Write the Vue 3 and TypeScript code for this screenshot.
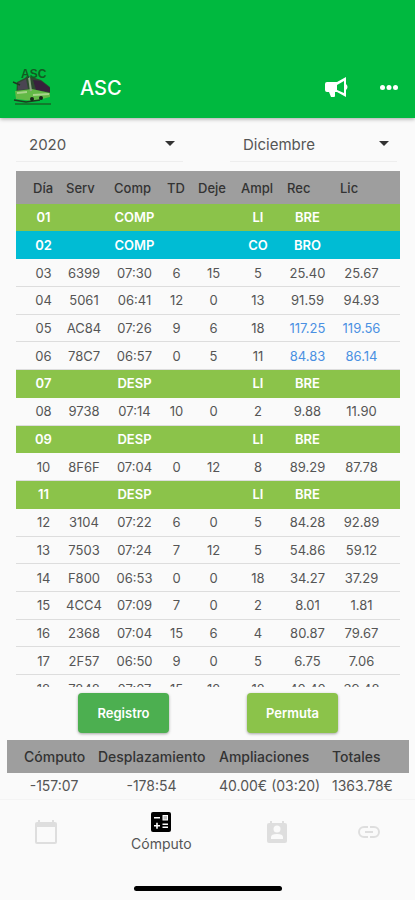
<script setup lang="ts">
import { ref } from 'vue'

type Tone = 'green' | 'cyan' | 'plain'

interface Day {
  tone: Tone
  cells: string[]
  extra?: boolean
}

const headers: string[] = ['Día', 'Serv', 'Comp', 'TD', 'Deje', 'Ampl', 'Rec', 'Lic']

const days: Day[] = [
  { tone: 'green', cells: ['01', '', 'COMP', '', '', 'LI', 'BRE', ''] },
  { tone: 'cyan', cells: ['02', '', 'COMP', '', '', 'CO', 'BRO', ''] },
  { tone: 'plain', cells: ['03', '6399', '07:30', '6', '15', '5', '25.40', '25.67'] },
  { tone: 'plain', cells: ['04', '5061', '06:41', '12', '0', '13', '91.59', '94.93'] },
  { tone: 'plain', cells: ['05', 'AC84', '07:26', '9', '6', '18', '117.25', '119.56'], extra: true },
  { tone: 'plain', cells: ['06', '78C7', '06:57', '0', '5', '11', '84.83', '86.14'], extra: true },
  { tone: 'green', cells: ['07', '', 'DESP', '', '', 'LI', 'BRE', ''] },
  { tone: 'plain', cells: ['08', '9738', '07:14', '10', '0', '2', '9.88', '11.90'] },
  { tone: 'green', cells: ['09', '', 'DESP', '', '', 'LI', 'BRE', ''] },
  { tone: 'plain', cells: ['10', '8F6F', '07:04', '0', '12', '8', '89.29', '87.78'] },
  { tone: 'green', cells: ['11', '', 'DESP', '', '', 'LI', 'BRE', ''] },
  { tone: 'plain', cells: ['12', '3104', '07:22', '6', '0', '5', '84.28', '92.89'] },
  { tone: 'plain', cells: ['13', '7503', '07:24', '7', '12', '5', '54.86', '59.12'] },
  { tone: 'plain', cells: ['14', 'F800', '06:53', '0', '0', '18', '34.27', '37.29'] },
  { tone: 'plain', cells: ['15', '4CC4', '07:09', '7', '0', '2', '8.01', '1.81'] },
  { tone: 'plain', cells: ['16', '2368', '07:04', '15', '6', '4', '80.87', '79.67'] },
  { tone: 'plain', cells: ['17', '2F57', '06:50', '9', '0', '5', '6.75', '7.06'] },
  { tone: 'plain', cells: ['18', '7848', '07:07', '15', '12', '12', '40.40', '39.48'] }
]

const years: string[] = ['2019', '2020', '2021']
const months: string[] = [
  'Enero', 'Febrero', 'Marzo', 'Abril', 'Mayo', 'Junio', 'Julio',
  'Agosto', 'Septiembre', 'Octubre', 'Noviembre', 'Diciembre'
]
const year = ref('2020')
const month = ref('Diciembre')
</script>

<template>
  <div class="screen">
    <header class="bar">
      <svg class="logo" viewBox="0 0 42 42" aria-hidden="true">
        <path d="M5 15 L13 11 L15 9 L20 10 L29 13 L38 20 L38 30 L4 31Z" fill="#2c4a2f" />
        <path d="M6 16 L14 12 L16 22 L6 23Z" fill="#4a4552" />
        <path d="M21 13 L29 14 L38 21 L38 25 L24 23Z" fill="#38203c" />
        <path d="M3 24 L20 22 L38 26 L38 30 L22 34 L4 32Z" fill="#62b946" />
        <path d="M17 10 L19 24" stroke="#8fa886" stroke-width="2" />
        <path d="M5 26 L15 25 M21 28 L37 27" stroke="#a8d38a" stroke-width="2" />
        <path d="M1 15 L8 18 M2 33 L14 35 L28 33" stroke="#1c3b20" stroke-width="1.5" fill="none" />
        <circle cx="20" cy="32" r="2" fill="#17231a" />
        <circle cx="29" cy="31" r="2" fill="#17231a" />
        <path d="M3 37 H39" stroke="#117a2c" stroke-width="2" />
        <text x="9" y="11" class="logo-text">ASC</text>
      </svg>
      <h1>ASC</h1>
      <button class="icon-button" type="button" aria-label="Avisos">
        <svg width="26" height="24" viewBox="0 0 26 24" aria-hidden="true">
          <path d="M4 6 H14 L23 1 V21 L14 16 H12 V20 Q12 21 11 21 H8 L6 16 H4 Q2 16 2 14 V8 Q2 6 4 6Z" fill="#fff" />
          <path d="M14 9 L21 5 V17 L14 14Z" fill="#00b93f" />
          <path d="M23 8 Q26 11 23 14Z" fill="#fff" />
        </svg>
      </button>
      <button class="icon-button" type="button" aria-label="Más opciones">
        <svg width="20" height="24" viewBox="0 0 20 24" aria-hidden="true" fill="#fff">
          <circle cx="3.5" cy="11.5" r="2.5" /><circle cx="10" cy="11.5" r="2.5" /><circle cx="16.5" cy="11.5" r="2.5" />
        </svg>
      </button>
    </header>

    <main>
      <div class="filters">
        <div class="picker">
          <select v-model="year" aria-label="Año">
            <option v-for="y in years" :key="y">{{ y }}</option>
          </select>
          <svg width="10" height="6" viewBox="0 0 10 6" aria-hidden="true"><path d="M0 0H10L5 5Z" /></svg>
        </div>
        <div class="picker">
          <select v-model="month" aria-label="Mes">
            <option v-for="m in months" :key="m">{{ m }}</option>
          </select>
          <svg width="10" height="6" viewBox="0 0 10 6" aria-hidden="true"><path d="M0 0H10L5 5Z" /></svg>
        </div>
      </div>

      <div class="days">
        <table>
          <colgroup>
            <col class="w-day" /><col class="w-serv" /><col class="w-comp" /><col class="w-td" />
            <col class="w-deje" /><col class="w-ampl" /><col class="w-comp" /><col class="w-lic" />
          </colgroup>
          <thead>
            <tr><th v-for="h in headers" :key="h" scope="col">{{ h }}</th></tr>
          </thead>
          <tbody>
            <tr v-for="d in days" :key="d.cells[0]" :class="[d.tone, { extra: d.extra }]">
              <td v-for="(c, i) in d.cells" :key="i">{{ c }}</td>
            </tr>
          </tbody>
        </table>
      </div>

      <div class="actions">
        <button type="button" class="register">Registro</button>
        <button type="button" class="swap">Permuta</button>
      </div>

      <div class="totals">
        <table>
          <colgroup>
            <col class="t-side" /><col class="t-move" /><col class="t-ext" /><col class="t-side" />
          </colgroup>
          <thead>
            <tr>
              <th scope="col">Cómputo</th><th scope="col">Desplazamiento</th>
              <th scope="col">Ampliaciones</th><th scope="col">Totales</th>
            </tr>
          </thead>
          <tbody>
            <tr><td>-157:07</td><td>-178:54</td><td>40.00€ (03:20)</td><td>1363.78€</td></tr>
          </tbody>
        </table>
      </div>
    </main>

    <nav>
      <div class="tabs">
        <a href="#calendario" aria-label="Calendario">
          <svg width="24" height="26" viewBox="0 0 24 26" aria-hidden="true">
            <path d="M3 4H21Q22 4 22 5V23Q22 24 21 24H3Q2 24 2 23V5Q2 4 3 4Z" fill="none" stroke="#dedede" stroke-width="2" />
            <path d="M2 4H22V8H2ZM4 1H6V4H4ZM18 1H20V4H18Z" fill="#dedede" />
          </svg>
        </a>
        <a href="#computo" class="current" aria-current="page">
          <svg width="20" height="20" viewBox="0 0 20 20" aria-hidden="true">
            <rect width="20" height="20" rx="2" fill="#000" />
            <path d="M3 5.8H9M11.5 12.2H17M11.5 15.2H17M3 13.7H9M6 10.7V16.7" stroke="#fff" stroke-width="1.6" />
            <rect x="12" y="3.5" width="4.5" height="4.5" fill="#bbb" stroke="#fff" />
          </svg>
          <span>Cómputo</span>
        </a>
        <a href="#contactos" aria-label="Contactos">
          <svg width="20" height="22" viewBox="0 0 20 22" aria-hidden="true">
            <path d="M2 2H3V0H5V2H15V0H17V2H18Q20 2 20 4V20Q20 22 18 22H2Q0 22 0 20V4Q0 2 2 2Z" fill="#dedede" />
            <circle cx="10" cy="8" r="3.5" fill="#fafafa" />
            <path d="M4 18V16Q4 13 10 13Q16 13 16 16V18Z" fill="#fafafa" />
          </svg>
        </a>
        <a href="#enlaces" aria-label="Enlaces">
          <svg width="22" height="12" viewBox="0 0 22 12" aria-hidden="true" fill="none" stroke="#dedede" stroke-width="2">
            <path d="M10 1H6A5 5 0 0 0 6 11H10M12 1H16A5 5 0 0 1 16 11H12M7 6H15" />
          </svg>
        </a>
      </div>
      <div class="home"></div>
    </nav>
  </div>
</template>

<style>
body {
  background: #fafafa;
}
</style>

<style scoped>
.screen {
  display: flex;
  flex-direction: column;
  height: 100vh;
  font-family: Inter, Roboto, sans-serif;
  font-size: 13px;
  color: #555555;
}

.bar {
  display: flex;
  align-items: center;
  gap: 16px;
  padding: 58px 16px 0 12px;
  height: 60px;
  flex: none;
  background: #00b93f;
  box-shadow: 0 1px 4px rgba(0, 0, 0, 0.35);
  color: #fff;
}

.logo {
  width: 42px;
  height: 42px;
}

.logo-text {
  font: bold 12px "Liberation Sans Narrow", "Liberation Sans", sans-serif;
  fill: #125c22;
}

h1 {
  flex: 1;
  margin: 0 0 0 10px;
  font-size: 20px;
  line-height: 24px;
  font-weight: 500;
}

.icon-button {
  display: flex;
  margin-left: 16px;
  padding: 0;
  border: 0;
  background: none;
}

.icon-button + .icon-button {
  margin-left: 14px;
}

main {
  display: flex;
  flex: 1;
  flex-direction: column;
  min-height: 0;
}

.filters {
  display: flex;
  justify-content: space-between;
  padding: 9px 18px 9px 16px;
}

.picker {
  display: flex;
  align-items: center;
  box-sizing: border-box;
  width: 167px;
  height: 35px;
  padding: 0 8px 0 13px;
  border-bottom: 1px solid #eeeeee;
}

.picker select {
  flex: 1;
  min-width: 0;
  padding: 0;
  border: 0;
  appearance: none;
  background: none;
  font: 15px Inter, Roboto, sans-serif;
  color: #555555;
}

.picker svg {
  fill: #333333;
}

.days {
  flex: 1;
  min-height: 0;
  margin: 0 15px 0 16px;
  overflow: hidden;
}

table {
  width: 100%;
  table-layout: fixed;
  border-collapse: collapse;
}

.days table {
  height: 532px;
}

th,
td {
  padding: 0 6px;
  white-space: nowrap;
  line-height: 16px;
}

th {
  height: 33px;
  background: #9e9e9e;
  color: #333333;
  font-weight: 500;
  text-align: left;
}

td {
  text-align: center;
}

th:first-child,
td:first-child {
  padding-left: 17px;
}

th:last-child,
td:last-child {
  padding-right: 17px;
}

.days tbody tr {
  border-bottom: 1px solid #dddddd;
}

.days tbody .green,
.days tbody .cyan {
  color: #fff;
  font-weight: 600;
}

.days tbody .green {
  background: #8bc34a;
  border-color: #8bc34a;
}

.days tbody .cyan {
  background: #00bcd4;
  border-color: #00bcd4;
}

.extra td:nth-last-child(-n + 2) {
  color: #4a90e2;
}

.w-day { width: 44px; }
.w-serv { width: 48px; }
.w-comp { width: 53px; }
.w-td { width: 31px; }
.w-deje { width: 43px; }
.w-ampl { width: 46px; }
.w-lic { width: 66px; }

.actions {
  display: flex;
  justify-content: space-around;
  padding: 6px 38px 7px 39px;
}

.actions button {
  width: 91px;
  height: 40px;
  padding: 0;
  border: 0;
  border-radius: 4px;
  box-shadow: 0 1px 3px rgba(0, 0, 0, 0.35);
  color: #fff;
  font: 600 13px Inter, Roboto, sans-serif;
}

.actions .register {
  background: #4caf50;
}

.actions .swap {
  background: #8bc34a;
}

.totals {
  padding: 0 6px 0 7px;
  font-size: 14px;
}

.totals th,
.totals td {
  padding-left: 7px;
  padding-right: 7px;
}

.totals th:first-child,
.totals td:first-child {
  padding-left: 17px;
}

.totals th:last-child,
.totals td:last-child {
  padding-right: 16px;
}

.totals td {
  height: 26px;
}

.t-side { width: 84px; }
.t-move { width: 121px; }
.t-ext { width: 113px; }

nav {
  flex: none;
  border-top: 1px solid #f4f4f4;
}

.tabs {
  display: flex;
  height: 64px;
}

.tabs a {
  display: flex;
  flex: 2;
  flex-direction: column;
  align-items: center;
  justify-content: center;
  gap: 4px;
  color: #555555;
  text-decoration: none;
}

.tabs .current {
  flex: 3;
}

.tabs span {
  font-size: 14px;
  line-height: 16px;
}

.home {
  width: 148px;
  height: 5px;
  margin: 22px auto 9px;
  border-radius: 3px;
  background: #000;
}
</style>
